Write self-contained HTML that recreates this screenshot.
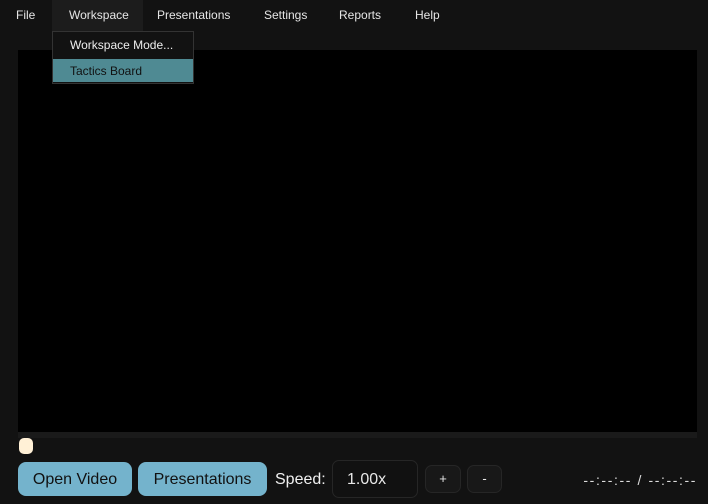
<!DOCTYPE html>
<html><head><style>
body{margin:0;width:708px;height:504px;background:#121212;font-family:"Liberation Sans",sans-serif;color:#e8e8e8;position:relative;overflow:hidden}
.m{position:absolute;top:0;height:31px;line-height:31px;font-size:12px;color:#e6e6e6}
.abs{position:absolute}
.btn{position:absolute;top:462px;height:34px;line-height:35px;background:#74b3cc;border-radius:8px;color:#111;font-size:16px;text-align:center}
</style></head><body>
<div class="abs" style="left:52px;top:0;width:91px;height:31px;background:#1c1c1c"></div>
<div class="m" style="left:16px">File</div>
<div class="m" style="left:69px">Workspace</div>
<div class="m" style="left:157px">Presentations</div>
<div class="m" style="left:264px">Settings</div>
<div class="m" style="left:339px">Reports</div>
<div class="m" style="left:415px">Help</div>
<div class="abs" style="left:18px;top:50px;width:679px;height:382px;background:#000"></div>
<div class="abs" style="left:18px;top:432px;width:679px;height:6px;background:#1a1a1a"></div>
<div class="abs" style="left:52px;top:31px;width:140px;height:51px;background:#121212;border:1px solid #333"></div>
<div class="abs" style="left:70px;top:36px;font-size:12px;line-height:18px;color:#eee">Workspace Mode...</div>
<div class="abs" style="left:53px;top:59px;width:140px;height:23px;background:#4f8a93"></div>
<div class="abs" style="left:70px;top:62px;font-size:12px;line-height:18px;color:#111">Tactics Board</div>
<div class="abs" style="left:19px;top:438px;width:14px;height:16px;border-radius:5px;background:#fff0d6"></div>
<div class="btn" style="left:18px;width:114px">Open Video</div>
<div class="btn" style="left:138px;width:129px">Presentations</div>
<div class="abs" style="left:275px;top:463px;line-height:34px;font-size:16px;color:#f0f0f0">Speed:</div>
<div class="abs" style="left:332px;top:460px;width:86px;height:38px;background:#111;border:1px solid #262626;border-radius:7px;box-sizing:border-box;line-height:37px;padding-left:14px;font-size:16px">1.00x</div>
<div class="abs" style="left:425px;top:465px;width:36px;height:28px;background:#181818;border:1px solid #262626;border-radius:7px;box-sizing:border-box;line-height:26px;text-align:center;font-size:13px">+</div>
<div class="abs" style="left:467px;top:465px;width:35px;height:28px;background:#181818;border:1px solid #262626;border-radius:7px;box-sizing:border-box;line-height:26px;text-align:center;font-size:13px">-</div>
<div class="abs" style="right:11px;top:463px;line-height:34px;font-size:14px;color:#ddd;letter-spacing:1.6px">--:--:-- / --:--:--</div>
</body></html>
